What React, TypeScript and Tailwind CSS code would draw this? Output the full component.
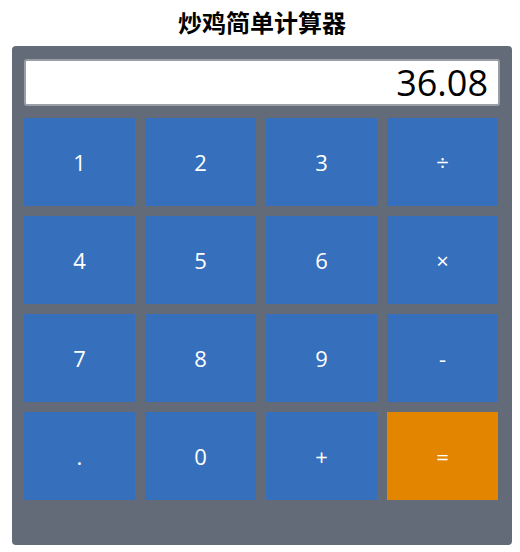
import React from "react";

const keys: { label: string; orange?: boolean }[] = [
  { label: "1" }, { label: "2" }, { label: "3" }, { label: "÷" },
  { label: "4" }, { label: "5" }, { label: "6" }, { label: "×" },
  { label: "7" }, { label: "8" }, { label: "9" }, { label: "-" },
  { label: "." }, { label: "0" }, { label: "+" }, { label: "=", orange: true },
];

export default function App() {
  return (
    <div
      className="w-[520px] h-[552px] bg-white flex flex-col"
      style={{ fontFamily: '"Open Sans", "Noto Sans CJK SC", sans-serif' }}
    >
      <h2
        className="h-[46px] flex items-center justify-center text-[24px] font-bold text-black pb-[2px] pl-[4px]"
        style={{ fontFamily: '"Noto Sans CJK SC", "Noto Sans", sans-serif' }}
      >
        炒鸡简单计算器
      </h2>
      <div className="ml-[12px] w-[500px] h-[499px] bg-[#636b79] rounded-[4px] pl-[12px] pr-[12px] pt-[13px] flex flex-col">
        <div className="h-[47px] w-[476px] bg-white border-2 border-[#9a9ea6] rounded-[3px] flex items-center justify-end pr-[10px] text-[36px] text-black leading-none">
          36.08
        </div>
        <div className="mt-[12px] grid grid-cols-[repeat(4,111px)] grid-rows-[repeat(4,88px)] gap-x-[10px] gap-y-[10px]">
          {keys.map((k) => (
            <div
              key={k.label}
              className={
                (k.orange ? "bg-[#e48500]" : "bg-[#3670bc]") +
                " flex items-center justify-center text-white text-[22px]"
              }
            >
              {k.label}
            </div>
          ))}
        </div>
      </div>
    </div>
  );
}
